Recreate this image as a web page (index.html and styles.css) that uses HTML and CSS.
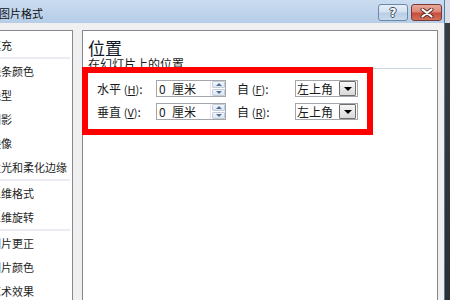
FILE: index.html
```html
<!DOCTYPE html>
<html lang="zh-CN">
<head>
<meta charset="utf-8">
<title>设置图片格式</title>
<link rel="stylesheet" href="styles.css">
</head>
<body>
<div class="screen">
  <div class="window">
    <div class="titlebar">
      <span class="title">图片格式</span>
      <div class="tb-buttons">
        <span class="tb-btn help">?</span>
        <span class="tb-btn close">
          <svg width="14" height="10" viewBox="0 0 14 10">
            <path d="M2.5 1.5 L11.5 8.5 M11.5 1.5 L2.5 8.5" stroke="#5a2a24" stroke-width="4" stroke-linecap="round"/>
            <path d="M2.5 1.5 L11.5 8.5 M11.5 1.5 L2.5 8.5" stroke="#ffffff" stroke-width="2.2" stroke-linecap="round"/>
          </svg>
        </span>
      </div>
    </div>
    <div class="body">
      <div class="nav">
        <div class="nav-item">填充</div>
        <div class="nav-sep"></div>
        <div class="nav-item">线条颜色</div>
        <div class="nav-item">线型</div>
        <div class="nav-item">阴影</div>
        <div class="nav-item">映像</div>
        <div class="nav-item">发光和柔化边缘</div>
        <div class="nav-sep"></div>
        <div class="nav-item">三维格式</div>
        <div class="nav-item">三维旋转</div>
        <div class="nav-sep"></div>
        <div class="nav-item">图片更正</div>
        <div class="nav-item">图片颜色</div>
        <div class="nav-item">艺术效果</div>
      </div>
      <div class="pane">
        <h1 class="pane-title">位置</h1>
        <div class="section">
          <span class="section-label">在幻灯片上的位置</span>
          <span class="section-rule"></span>
        </div>
        <div class="form">
          <span class="label">水平 <span class="mn">(<u>H</u>)</span>:</span>
          <div class="spin">
            <span class="spin-value"><span class="num">0</span>厘米</span>
            <span class="spin-btns">
              <span class="spin-btn"><span class="tri-up"></span></span>
              <span class="spin-btn"><span class="tri-down"></span></span>
            </span>
          </div>
          <span class="label from">自 <span class="mn">(<u>F</u>)</span>:</span>
          <div class="combo">
            <span class="combo-value">左上角</span>
            <span class="combo-btn"><span class="tri-black"></span></span>
          </div>

          <span class="label">垂直 <span class="mn">(<u>V</u>)</span>:</span>
          <div class="spin">
            <span class="spin-value"><span class="num">0</span>厘米</span>
            <span class="spin-btns">
              <span class="spin-btn"><span class="tri-up"></span></span>
              <span class="spin-btn"><span class="tri-down"></span></span>
            </span>
          </div>
          <span class="label from">自 <span class="mn">(<u>R</u>)</span>:</span>
          <div class="combo">
            <span class="combo-value">左上角</span>
            <span class="combo-btn"><span class="tri-black"></span></span>
          </div>
        </div>
      </div>
    </div>
  </div>
  <div class="desktop"></div>
</div>
<div class="annotation"></div>
</body>
</html>
```

FILE: styles.css
```css
* { box-sizing: border-box; }

html, body {
  margin: 0;
  padding: 0;
}

body {
  width: 450px;
  height: 300px;
  overflow: hidden;
  position: relative;
  font-family: "Noto Sans CJK SC", "Liberation Sans", sans-serif;
  color: #1a1a1a;
  background: #3a3a3a;
}

.screen {
  display: flex;
  width: 450px;
  height: 300px;
  overflow: hidden;
}

.window {
  width: 445px;
  flex: none;
  display: flex;
  flex-direction: column;
  background: #f0f0f0;
  border-right: 1px solid #4d7fae;
}

.desktop {
  flex: 1;
  background: linear-gradient(#d9dee7 0, #d9dee7 23px, #3b3b3b 23px, #2e2e2e 100%);
}

/* title bar */
.titlebar {
  height: 23px;
  flex: none;
  display: flex;
  align-items: center;
  background: linear-gradient(#cadcf0, #b6cde8);
}

.title {
  margin-left: -1px;
  font-size: 11px;
  line-height: 11px;
  color: #111;
  margin-top: 3px;
}

.tb-buttons {
  margin-left: auto;
  margin-right: 2px;
  display: flex;
  gap: 3px;
  align-self: flex-start;
  margin-top: 4px;
}

.tb-btn {
  height: 17px;
  border-radius: 3px;
  display: flex;
  align-items: center;
  justify-content: center;
}

.help {
  width: 30px;
  border: 1px solid #6f87a6;
  background: linear-gradient(#e6eef8 0, #d3e1f1 48%, #b9cde6 52%, #c9daee 100%);
  color: #fff;
  font-family: "DejaVu Sans", sans-serif;
  font-weight: bold;
  font-size: 12px;
  line-height: 12px;
  text-shadow: 1px 0 0 #384a62, -1px 0 0 #384a62, 0 1px 0 #384a62, 0 -1px 0 #384a62;
}

.close {
  width: 31px;
  border: 1px solid #7a3a31;
  background: linear-gradient(#e8a99c 0, #dc8474 48%, #c64a3a 52%, #d4705e 100%);
}

/* body */
.body {
  flex: 1;
  display: flex;
  padding-top: 7px;
  gap: 9px;
  min-height: 0;
}

.nav {
  margin-left: -22px;
  width: 95px;
  flex: none;
  background: #fff;
  border: 1px solid #828790;
  border-bottom: none;
  padding-top: 2px;
  font-size: 11px;
  overflow: hidden;
}

.nav-item {
  height: 24px;
  line-height: 24px;
  padding-left: 11px;
  white-space: nowrap;
  color: #1e1e1e;
}

.nav-sep {
  height: 2px;
  background: #ebebf2;
  margin-right: 2px;
}

.pane {
  width: 356px;
  flex: none;
  background: #fff;
  border: 1px solid #828790;
  border-bottom: none;
  padding: 8px 5px 0 5px;
}

.pane-title {
  margin: 0;
  font-size: 17px;
  line-height: 18px;
  font-weight: normal;
  color: #101828;
}

.section {
  display: flex;
  align-items: flex-end;
}

.section-label {
  font-size: 12px;
  line-height: 13px;
  white-space: nowrap;
}

.section-rule {
  flex: 1;
  height: 1px;
  background: #c9d4df;
  margin-bottom: 1px;
}

.form {
  display: grid;
  grid-template-columns: 59px 70px 69px 63px;
  grid-auto-rows: 17px;
  row-gap: 6px;
  margin-top: 10px;
  margin-left: 9px;
  align-items: center;
  font-size: 12px;
}

.label {
  white-space: nowrap;
  line-height: 17px;
}

.label.from {
  padding-left: 11px;
}

.mn {
  font-size: 11px;
}

.spin, .combo {
  height: 17px;
  border: 1px solid #a3a6ab;
  background: #fff;
  display: flex;
  align-items: stretch;
}

.spin-value {
  flex: 1;
  padding-left: 2px;
  line-height: 15px;
  white-space: nowrap;
}

.num {
  display: inline-block;
  width: 13px;
}

.spin-btns {
  width: 15px;
  display: flex;
  flex-direction: column;
  gap: 1px;
  padding: 0 0 0 1px;
  border-left: 1px solid #e3e6ea;
}

.spin-btn {
  flex: 1;
  background: linear-gradient(#f3f6fa, #dce4ee);
  border: 1px solid #c4cdd8;
  border-radius: 1px;
  display: flex;
  align-items: center;
  justify-content: center;
}

.tri-up {
  width: 0;
  height: 0;
  border-left: 3px solid transparent;
  border-right: 3px solid transparent;
  border-bottom: 3px solid #4f72a3;
}

.tri-down {
  width: 0;
  height: 0;
  border-left: 3px solid transparent;
  border-right: 3px solid transparent;
  border-top: 3px solid #4f72a3;
}

.combo-value {
  flex: 1;
  padding-left: 1px;
  line-height: 15px;
  white-space: nowrap;
}

.combo-btn {
  width: 17px;
  margin: 0 1px 0 0;
  border: 1px solid #6f6f6f;
  border-radius: 1px;
  background: linear-gradient(#f7f7f7, #d9d9d9);
  display: flex;
  align-items: center;
  justify-content: center;
}

.tri-black {
  width: 0;
  height: 0;
  border-left: 4px solid transparent;
  border-right: 4px solid transparent;
  border-top: 4px solid #000;
  margin-top: 1px;
}

/* red annotation box drawn over the screenshot */
.annotation {
  position: absolute;
  left: 82px;
  top: 67px;
  width: 291px;
  height: 68px;
  border: 6px solid #ff0000;
  pointer-events: none;
}
```
